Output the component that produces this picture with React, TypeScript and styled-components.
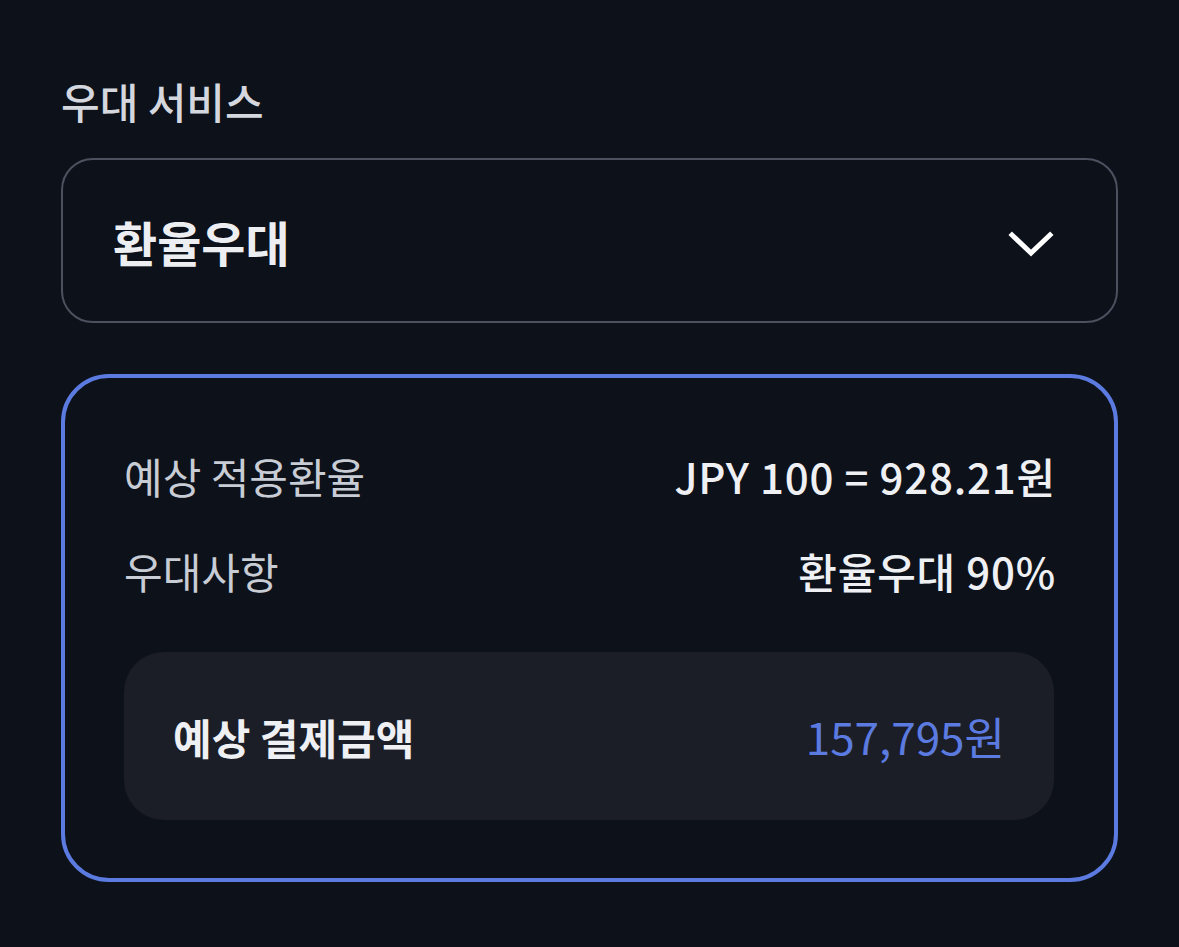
import React from "react";
import styled, { createGlobalStyle } from "styled-components";

const GlobalStyle = createGlobalStyle`
  html, body {
    margin: 0;
    padding: 0;
    background-color: #0d111a;
  }
  body {
    font-family: "Noto Sans CJK KR", "Noto Sans", sans-serif;
    color: #e8eaef;
  }
`;

const Page = styled.div`
  min-height: 947px;
  box-sizing: border-box;
  padding: 74px 61px 0 61px;
  display: flex;
  flex-direction: column;
`;

const SectionLabel = styled.div`
  font-size: 42px;
  font-weight: 500;
  line-height: 53px;
  color: #d4d7de;
  margin-bottom: 31px;
`;

const SelectBox = styled.button`
  height: 165px;
  box-sizing: border-box;
  border: 2px solid #4b515e;
  border-radius: 32px;
  background: transparent;
  display: flex;
  align-items: center;
  justify-content: space-between;
  padding: 0 62px 0 50px;
  font-family: inherit;
  font-size: 48px;
  font-weight: 700;
  color: #eceef2;
  cursor: pointer;
  margin-bottom: 51px;
`;

const ChevronWrap = styled.span`
  display: flex;
  margin-top: 8px;
`;

const Chevron = () => (
  <ChevronWrap>
    <svg width="46" height="28" viewBox="0 0 46 28" fill="none">
      <polyline
        points="4,4 23,22 42,4"
        stroke="#ffffff"
        strokeWidth="5"
        strokeLinecap="square"
      />
    </svg>
  </ChevronWrap>
);

const Card = styled.div`
  border: 4px solid #5b7be0;
  border-radius: 48px;
  padding: 50px 60px 58px 59px;
  display: flex;
  flex-direction: column;
`;

const Row = styled.div`
  height: 95px;
  display: flex;
  align-items: center;
  justify-content: space-between;
  font-size: 42px;
`;

const RowLabel = styled.span`
  color: #c8ccd4;
`;

const RowValue = styled.span`
  color: #eef0f4;
  font-weight: 500;
  letter-spacing: 0.8px;
  margin-right: -2px;
`;

const TotalBox = styled.div`
  margin-top: 34px;
  height: 168px;
  box-sizing: border-box;
  background-color: #1b1e27;
  border-radius: 40px;
  padding: 0 49px;
  display: flex;
  align-items: center;
  justify-content: space-between;
`;

const TotalLabel = styled.span`
  font-size: 42px;
  font-weight: 700;
  color: #eef0f4;
`;

const TotalValue = styled.span`
  font-size: 44px;
  color: #5b7be0;
`;

const App = () => {
  return (
    <>
      <GlobalStyle />
      <Page>
        <SectionLabel>우대 서비스</SectionLabel>
        <SelectBox>
          <span>환율우대</span>
          <Chevron />
        </SelectBox>
        <Card>
          <Row>
            <RowLabel>예상 적용환율</RowLabel>
            <RowValue>JPY 100 = 928.21원</RowValue>
          </Row>
          <Row>
            <RowLabel>우대사항</RowLabel>
            <RowValue>환율우대 90%</RowValue>
          </Row>
          <TotalBox>
            <TotalLabel>예상 결제금액</TotalLabel>
            <TotalValue>157,795원</TotalValue>
          </TotalBox>
        </Card>
      </Page>
    </>
  );
};

export default App;
